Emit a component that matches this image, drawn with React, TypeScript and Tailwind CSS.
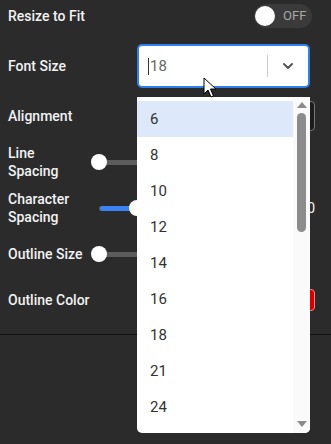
import { ChevronDown } from "lucide-react";

const sizes = ["6", "8", "10", "12", "14", "16", "18", "21", "24"];

function Slider({ value, active }: { value: number; active?: boolean }) {
  return (
    <div className="relative flex-1 h-4 flex items-center">
      <div className="absolute left-2 right-0 h-[5px] bg-[#5c5c5c] rounded-full" />
      {active && <div className="absolute left-[9px] h-[5px] bg-[#3b82f6] rounded-full" style={{ width: value }} />}
      <div className="absolute w-4 h-4 rounded-full bg-white" style={{ left: active ? value : 0 }} />
    </div>
  );
}

export default function App() {
  return (
    <div className="relative w-[331px] h-[444px] overflow-hidden bg-[#2b2b2b] text-[14px] font-medium text-[#f2f2f2]" style={{ fontFamily: "Roboto, 'Liberation Sans', sans-serif" }}>
      <div className="pl-2 pr-4 pt-1">
        {/* Resize to Fit */}
        <div className="flex items-center h-6">
          <span className="flex-1">Resize to Fit</span>
          <div className="flex items-center w-[58px] h-6 mr-[3px] rounded-full bg-[#3a3a3a] pl-[1px]">
            <div className="w-5 h-5 rounded-full bg-white" />
            <span className="ml-2 text-[13px] font-normal text-[#a8a8a8]">OFF</span>
          </div>
        </div>

        {/* Font Size */}
        <div className="flex items-center h-11 mt-4">
          <span className="w-[129px]">Font Size</span>
          <div className="flex items-center w-[173px] h-11 border-2 border-[#2f80ed] rounded-[5px] bg-white">
            <span className="ml-[9px] h-[17px] w-px bg-[#333]" />
            <span className="ml-px text-[15px] font-normal text-[#666]">18</span>
            <div className="ml-auto h-[22px] w-px bg-[#ccc]" />
            <div className="w-10 flex justify-center">
              <ChevronDown className="w-4 h-4 text-[#555]" strokeWidth={3} />
            </div>
          </div>
        </div>

        {/* Alignment */}
        <div className="flex items-center h-[30px] mt-[13px]">
          <span className="flex-1">Alignment</span>
          <div className="w-[178px] h-[30px] rounded border border-[#777] bg-[#1c1c1c]" />
        </div>

        {/* Line Spacing */}
        <div className="flex items-center h-9 mt-[13px]">
          <span className="w-[83px] leading-[18px]">Line<br />Spacing</span>
          <Slider value={0} />
          <span className="w-6" />
        </div>

        {/* Character Spacing */}
        <div className="flex items-center h-9 mt-[10px]">
          <span className="w-[83px] leading-[18px]">Character<br />Spacing</span>
          <Slider value={38} active />
          <span className="w-6 text-right font-normal">0</span>
        </div>

        {/* Outline Size */}
        <div className="flex items-center h-9 mt-[10px]">
          <span className="w-[83px]">Outline Size</span>
          <Slider value={0} />
          <span className="w-6" />
        </div>

        {/* Outline Color */}
        <div className="flex items-center h-[22px] mt-[17px]">
          <span className="flex-1">Outline Color</span>
          <div className="w-10 h-[22px] rounded border border-[#e88] bg-[#d40000]" />
        </div>
      </div>

      <div className="mt-[23px] h-px bg-[#111]" />

      {/* dropdown list */}
      <div className="absolute left-[137px] top-[97px] w-[173px] h-[336px] flex rounded-b-[5px] overflow-hidden bg-white">
        <div className="flex-1 pt-1">
          {sizes.map((s, i) => (
            <div key={s} className={`h-9 flex items-center pl-[13px] text-[15px] font-normal text-[#333] ${i === 0 ? "bg-[#dde9fb]" : ""}`}>
              {s}
            </div>
          ))}
        </div>
        <div className="w-[17px] bg-[#fafafa] flex flex-col items-center">
          <svg width="12" height="8" viewBox="0 0 12 8" className="mt-[4px]">
            <path d="M6 1 L11 7 L1 7 Z" fill="#8a8a8a" />
          </svg>
          <div className="mt-[4px] w-[9px] h-[119px] rounded-full bg-[#8c8c8c]" />
          <svg width="12" height="8" viewBox="0 0 12 8" className="mt-auto mb-[5px]">
            <path d="M1 1 L11 1 L6 7 Z" fill="#8a8a8a" />
          </svg>
        </div>
      </div>

      {/* mouse cursor */}
      <svg className="absolute left-[203px] top-[77px]" width="14" height="22" viewBox="0 0 14 22">
        <path d="M1 1 L1 17 L5 13 L8 20 L10.5 19 L7.5 12 L13 12 Z" fill="white" stroke="black" strokeWidth="1" strokeLinejoin="round" />
      </svg>
    </div>
  );
}
